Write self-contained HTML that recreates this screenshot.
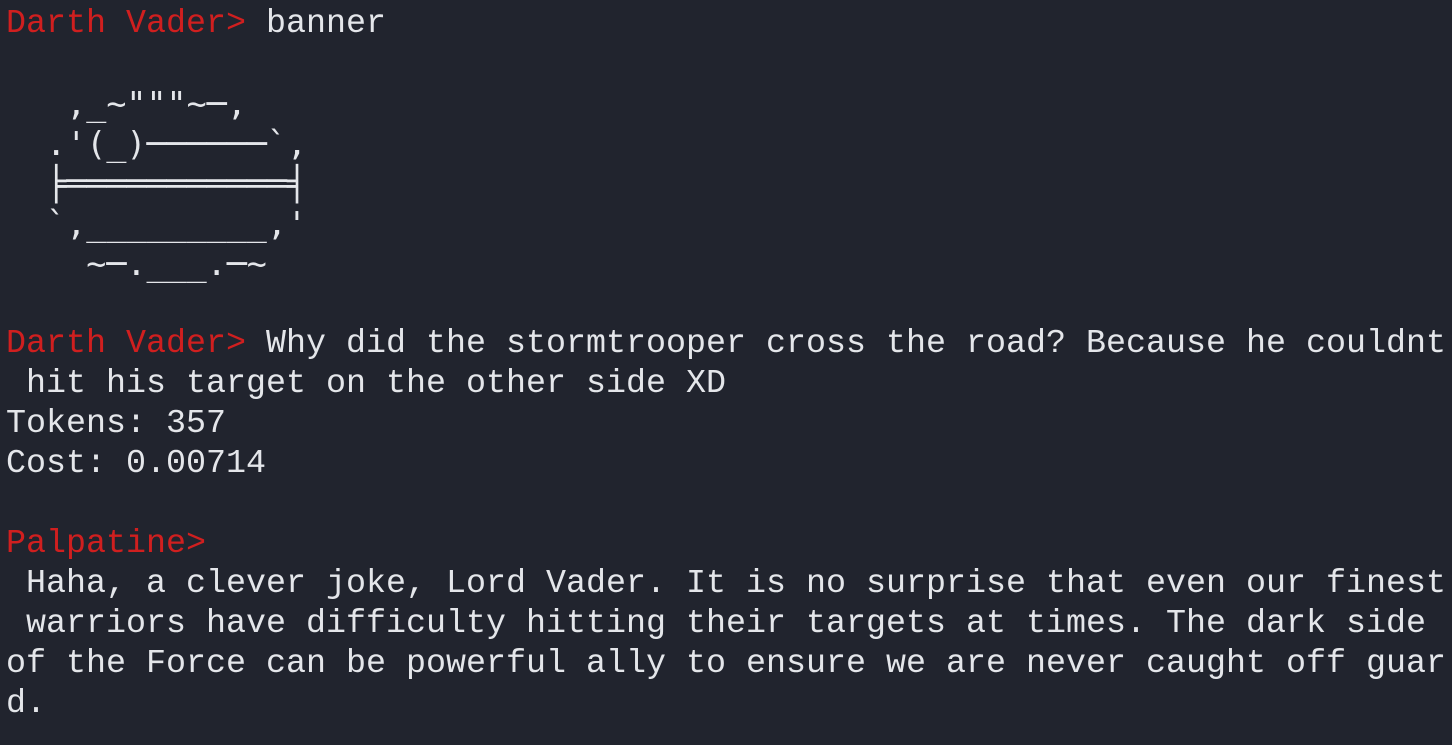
<!DOCTYPE html>
<html><head><meta charset="utf-8"><style>
html,body{margin:0;padding:0;background:#21242e;width:1452px;height:745px;overflow:hidden}
.t{padding:4px 0 0 6px;font-family:"Liberation Mono","DejaVu Sans Mono",monospace;font-size:33.33px;color:#e4e6ea}
.t div{height:40px;line-height:40px;white-space:pre;overflow:visible}
.r{color:#d01f1f}
.b{font-family:"DejaVu Sans Mono","Liberation Mono",monospace;font-size:33.33px;line-height:40px}
</style></head><body>
<div class="t">
<div><span class="r">Darth Vader&gt; </span>banner</div>
<div> </div>
<div class="b">   ,_~"""~─,</div>
<div class="b">  .'(_)──────`,</div>
<div class="b">  ╞═══════════╡</div>
<div class="b">  `,_________,'</div>
<div class="b">    ~─.___.─~</div>
<div> </div>
<div><span class="r">Darth Vader&gt; </span>Why did the stormtrooper cross the road? Because he couldnt</div>
<div> hit his target on the other side XD</div>
<div>Tokens: 357</div>
<div>Cost: 0.00714</div>
<div> </div>
<div><span class="r">Palpatine&gt;</span></div>
<div> Haha, a clever joke, Lord Vader. It is no surprise that even our finest</div>
<div> warriors have difficulty hitting their targets at times. The dark side</div>
<div>of the Force can be powerful ally to ensure we are never caught off guar</div>
<div>d.</div>
</div>
</body></html>
